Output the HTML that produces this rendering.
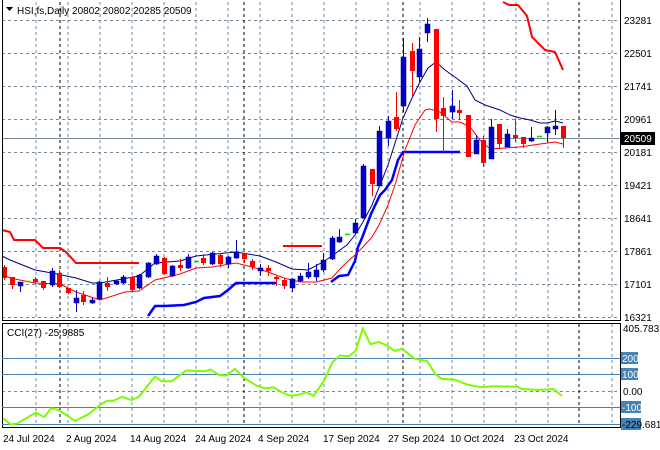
<!DOCTYPE html>
<html><head><meta charset="utf-8"><style>
html,body{margin:0;padding:0;background:#fff}
svg{display:block}
text{font-family:"Liberation Sans",sans-serif;font-size:10px}
</style></head><body>
<svg width="660" height="450" viewBox="0 0 660 450" xmlns="http://www.w3.org/2000/svg">
<rect width="660" height="450" fill="#fff"/>
<g stroke="#778899" stroke-dasharray="3,3" stroke-width="1" fill="none">
<path d="M36 2V320M68 2V320M100 2V320M132 2V320M164 2V320M196 2V320M228 2V320M260 2V320M292 2V320M324 2V320M356 2V320M388 2V320M420 2V320M452 2V320M484 2V320M516 2V320M548 2V320M612 2V320"/>
<path d="M36 324V426M68 324V426M100 324V426M132 324V426M164 324V426M196 324V426M228 324V426M260 324V426M292 324V426M324 324V426M356 324V426M388 324V426M420 324V426M452 324V426M484 324V426M516 324V426M548 324V426M612 324V426"/>
<path d="M2 20.5H620M2 53.5H620M2 86.5H620M2 119.5H620M2 152.5H620M2 185.5H620M2 218.5H620M2 251.5H620M2 284.5H620M2 317.5H620"/>
<path d="M2 391.5H620"/>
</g>
<g stroke="#000" stroke-dasharray="3,3" stroke-width="1">
<path d="M60 2V320M244 2V320M403 2V320M579 2V320M60 324V426M244 324V426M403 324V426M579 324V426"/>
</g>
<path d="M2 138.5H620" stroke="#778899" stroke-width="1"/>
<!-- lines -->
<polyline fill="none" stroke="#ff0000" stroke-width="2" points="2,230 10,232 14,240 35,240 43,248 60,248 66,252 76,263 139,263"/>
<polyline fill="none" stroke="#ff0000" stroke-width="2" points="283,246 322,246"/>
<polyline fill="none" stroke="#ff0000" stroke-width="2" points="503,2 509,5 518,5 527,16 532,37 545,50 555,52 563,70"/>
<polyline fill="none" stroke="#0000ff" stroke-width="2.5" points="148,316 155,306 164,306 184,305 196,302 204,298 220,296 228,290 236,283 276,283"/>
<polyline fill="none" stroke="#0000ff" stroke-width="2.5" points="331,282 339,276 348,275 355,261 358,247 362,238 371,214 380,195 385,190 392,180 398,160 403,152 404,152 460,152"/>
<polyline fill="none" stroke="#000080" stroke-width="1" points="2,256 10,260 35,270 52,273 76,278 92,283 100,283 139,276 155,263 180,261 196,256 236,252 260,256 276,262 292,269 308,270 323,262 332,256 340,250 347,245 355,235 363,222 372,205 380,185 388,165 396,140 403,118 412,98 420,82 428,68 436,62 445,70 452,75 467,86 475,100 485,105 500,110 510,115 520,118 530,120 540,123 547,123 555,121 563,123"/>
<polyline fill="none" stroke="#ff0000" stroke-width="1" points="2,274 10,278 35,283 60,284 76,292 100,300 125,292 139,291 155,280 180,274 196,268 212,267 236,263 252,267 268,272 284,278 300,282 316,282 332,278 339,270 347,262 355,255 363,247 372,237 379,225 388,205 395,185 405,150 415,125 425,110 430,109 440,112 452,122 460,122 470,127 480,140 490,149 505,148 520,147 540,144 555,142 563,144"/>
<!-- candles: wicks -->
<g stroke-width="1">
<g stroke="#ff0000">
<path d="M4.5 265V280M12.5 277V289M35.5 277V284M43.5 281V290M59.5 270V288M68.5 288V294M83.5 291V305M107.5 277V291M132.5 276V292M164.5 257V275M180.5 259V271M203.5 254V265M220.5 253V267M244.5 253V263M252.5 259V270M268.5 265V276M276.5 276V286M284.5 278V289M372.5 169V196M396.5 92V131M412.5 43V96M436.5 29V132M443.5 97V152M459.5 100V120M468.5 115V157M483.5 136V167M499.5 124V149M515.5 119V142M523.5 137V148M563.5 126V148"/>
</g>
<g stroke="#0000cd">
<path d="M20.5 282V292M52.5 268V287M76.5 290V312M92.5 297V304M99.5 281V300M116.5 280V285M123.5 275V284M139.5 274V289M148.5 262V278M156.5 254V265M172.5 265V277M188.5 254V269M212.5 252V265M228.5 256V268M236.5 240V259M260.5 264V276M292.5 278V292M300.5 273V282M308.5 263V279M316.5 264V281M323.5 253V272M332.5 236V260M339.5 229V243M355.5 219V234M363.5 164V218M379.5 126V186M388.5 116V146M403.5 38V112M419.5 37V82M427.5 18V42M452.5 90V119M476.5 135V154M491.5 119V159M507.5 129V147M531.5 127V142M547.5 126V142M555.5 110V135"/>
</g>
</g>
<!-- bodies -->
<g fill="#ff0000">
<rect x="2" y="267" width="5" height="11"/><rect x="10" y="277" width="5" height="8"/><rect x="33" y="279" width="5" height="3"/><rect x="41" y="281" width="5" height="7"/><rect x="57" y="273" width="5" height="14"/><rect x="66" y="288" width="5" height="5"/><rect x="81" y="295" width="5" height="7"/><rect x="105" y="283" width="5" height="4"/><rect x="130" y="277" width="5" height="13"/><rect x="162" y="258" width="5" height="16"/><rect x="178" y="265" width="5" height="3"/><rect x="201" y="258" width="5" height="5"/><rect x="218" y="255" width="5" height="9"/><rect x="242" y="253" width="5" height="6"/><rect x="250" y="261" width="5" height="6"/><rect x="266" y="268" width="5" height="3"/><rect x="274" y="277" width="5" height="2"/><rect x="282" y="280" width="5" height="6"/><rect x="370" y="169" width="5" height="15"/><rect x="394" y="117" width="5" height="12"/><rect x="410" y="51" width="5" height="20"/><rect x="434" y="29" width="5" height="90"/><rect x="441" y="108" width="5" height="8"/><rect x="457" y="110" width="5" height="3"/><rect x="466" y="115" width="5" height="42"/><rect x="481" y="140" width="5" height="23"/><rect x="497" y="124" width="5" height="20"/><rect x="513" y="135" width="5" height="3"/><rect x="521" y="137" width="5" height="7"/><rect x="561" y="126" width="5" height="12"/>
</g>
<g fill="#0000cd" stroke="#000080" stroke-width="0.5">
<rect x="18" y="282" width="5" height="4"/><rect x="50" y="271" width="5" height="14"/><rect x="74" y="298" width="5" height="5"/><rect x="90" y="300" width="5" height="3"/><rect x="97" y="282" width="5" height="17"/><rect x="114" y="281" width="5" height="3"/><rect x="121" y="277" width="5" height="6"/><rect x="137" y="275" width="5" height="13"/><rect x="146" y="263" width="5" height="14"/><rect x="154" y="256" width="5" height="8"/><rect x="170" y="266" width="5" height="10"/><rect x="186" y="257" width="5" height="11"/><rect x="210" y="253" width="5" height="11"/><rect x="226" y="257" width="5" height="7"/><rect x="234" y="252" width="5" height="6"/><rect x="258" y="268" width="5" height="3"/><rect x="290" y="279" width="5" height="9"/><rect x="298" y="276" width="5" height="5"/><rect x="306" y="272" width="5" height="5"/><rect x="314" y="270" width="5" height="7"/><rect x="321" y="260" width="5" height="10"/><rect x="330" y="238" width="5" height="21"/><rect x="337" y="237" width="5" height="5"/><rect x="353" y="223" width="5" height="10"/><rect x="361" y="166" width="5" height="52"/><rect x="377" y="131" width="5" height="55"/><rect x="386" y="121" width="5" height="17"/><rect x="401" y="57" width="5" height="49"/><rect x="417" y="49" width="5" height="28"/><rect x="425" y="24" width="5" height="9"/><rect x="450" y="106" width="5" height="6"/><rect x="474" y="140" width="5" height="14"/><rect x="489" y="127" width="5" height="32"/><rect x="505" y="134" width="5" height="13"/><rect x="529" y="138" width="5" height="3"/><rect x="545" y="127" width="5" height="6"/><rect x="553" y="126" width="5" height="3"/>
</g>
<g stroke="#00dd00" stroke-width="1.5"><path d="M25 281.5H30M194 261.5H199M345 234.5H350M537 136.5H542"/></g>
<!-- panel borders -->
<path d="M2.5 0V320.5H620.5V0M2.5 323V427.5H620.5V323M2 323.5H620" stroke="#000" stroke-width="1" fill="none"/>
<!-- CCI levels -->
<g stroke="#4682b4" stroke-width="1"><path d="M2 358.5H620M2 374.5H620M2 407.5H620M2 424.5H620"/></g>
<polyline fill="none" stroke="#7cfc00" stroke-width="2" points="3.4,418.3 10.5,424.4 16.8,423.7 35.8,412.6 44.2,417 51.3,408.2 58.9,410.2 74.9,421 88.4,414.3 101,404.2 107.3,400.8 113.6,400.8 122,396.8 131.3,400.1 138.9,396.8 154.9,376.6 162,381.3 171.7,381.3 186,370.5 205.4,371.2 210.4,369.5 218.9,374.9 226.4,375.6 234.8,368.8 244.1,377.9 256.7,385.7 265.2,388.4 273.6,387.3 282,392.4 290.4,395.8 298.8,394.7 306.4,392.4 313.6,395.8 324.1,380.6 332.5,362.1 340.1,355.4 348.5,356.4 355.6,351 362.8,328.4 370.4,344.2 378.8,341.9 386.4,345.3 394.8,351 401.9,348.6 414.6,358.7 427.2,361.1 435.6,374.5 441.9,378.9 454.5,379.6 467.2,384.6 481.9,387.3 492.4,386.3 517.7,386.7 521.9,389 538.7,390 553.5,389 561.9,395.8"/>
<!-- texts -->
<path d="M6 7H13L9.5 11Z" fill="#000"/>
<text x="17" y="14" fill="#000">HSI,fs,Daily  20802 20802 20285 20509</text>
<text x="7" y="336" fill="#000">CCI(27) -25.9885</text>
<g fill="#000">
<text x="624" y="24">23281</text><text x="624" y="57">22501</text><text x="624" y="90">21741</text><text x="624" y="123">20961</text><text x="624" y="156">20181</text><text x="624" y="189">19421</text><text x="624" y="222">18641</text><text x="624" y="255">17861</text><text x="624" y="288">17101</text><text x="624" y="321">16321</text>
</g>
<rect x="621" y="132" width="34" height="13" fill="#000"/>
<text x="624" y="142" fill="#fff">20509</text>
<text x="623" y="332" fill="#000">405.7837</text>
<rect x="621" y="352" width="17" height="12" fill="#4682b4"/><text x="622" y="362" fill="#fff">200</text>
<rect x="621" y="368" width="17" height="12" fill="#4682b4"/><text x="622" y="378" fill="#fff">100</text>
<text x="623" y="395" fill="#000">0.00</text>
<rect x="621" y="401" width="20" height="12" fill="#4682b4"/><text x="622" y="411" fill="#fff">-100</text>
<rect x="621" y="418" width="20" height="12" fill="#4682b4"/><text x="622" y="428" fill="#000">-229.6815</text>
<g fill="#000">
<text x="3" y="442">24 Jul 2024</text><text x="66" y="442">2 Aug 2024</text><text x="130" y="442">14 Aug 2024</text><text x="195" y="442">24 Aug 2024</text><text x="258" y="442">4 Sep 2024</text><text x="323" y="442">17 Sep 2024</text><text x="388" y="442">27 Sep 2024</text><text x="450" y="442">10 Oct 2024</text><text x="514" y="442">23 Oct 2024</text>
</g>
</svg>
</body></html>
